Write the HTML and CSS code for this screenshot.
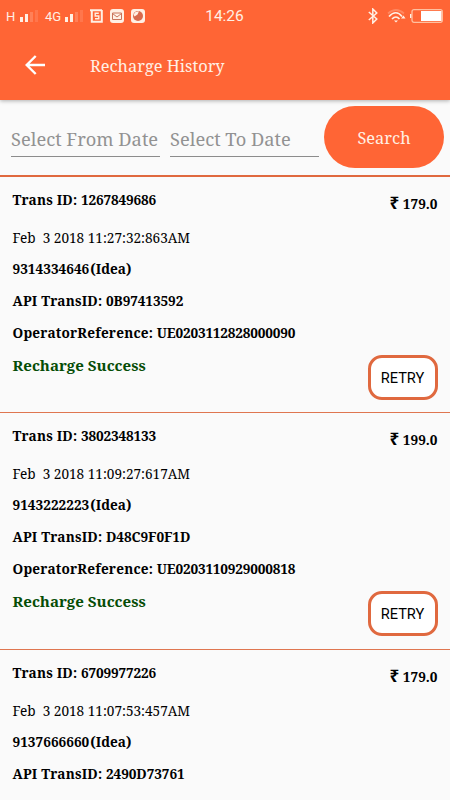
FILE: index.html
```html
<!DOCTYPE html>
<html lang="en">
<head>
  <meta charset="UTF-8" />
  <meta name="viewport" content="width=device-width, initial-scale=1.0"/>
  <title>Recharge History</title>
  <link rel="stylesheet" href="styles.css">
</head>
<body>
  <header class="header">
    <div class="status-bar">
      <div class="status-left">
        <span class="network">H</span>
        <svg class="signal" width="18" height="12" viewBox="0 0 18 12" fill="#fff0e4">
          <rect x="0" y="7" width="3" height="5"/><rect x="5" y="4" width="3" height="8"/>
          <rect x="10" y="2" width="3" height="10" opacity=".2"/><rect x="15" y="0" width="3" height="12" opacity=".13"/>
        </svg>
        <span class="network four-g">4G</span>
        <svg class="signal" width="18" height="12" viewBox="0 0 18 12" fill="#fff0e4">
          <rect x="0" y="7" width="3" height="5"/><rect x="5" y="4" width="3" height="8"/>
          <rect x="10" y="2" width="3" height="10" opacity=".2"/><rect x="15" y="0" width="3" height="12" opacity=".13"/>
        </svg>
        <svg class="note" width="13" height="14" viewBox="0 0 13 14" fill="none" stroke="#fff0e4">
          <path d="M0 1.2h12M1.8 1v11.8h10V1" stroke-width="2"/>
          <path d="M8.8 4.3H5.2V7h3.6v2.8H5" stroke-width="1.4"/>
        </svg>
        <svg class="note" width="14" height="14" viewBox="0 0 14 14">
          <rect width="14" height="14" rx="3" fill="#fff0e4"/>
          <path d="M2.5 4h9v6.5h-9zM2.5 4.5L7 8l4.500-3.500" fill="none" stroke="#c9745b"/>
        </svg>
        <svg class="note" width="14" height="14" viewBox="0 0 14 14">
          <rect width="14" height="14" rx="3" fill="#fff0e4"/>
          <circle cx="7" cy="7" r="5" fill="#d96a4c"/>
          <path d="M2.500 5.500l2-2.500L8 2.300 6.500 5.500l-3 2z" fill="#fff0e4"/>
        </svg>
      </div>
      <span class="clock">14:26</span>
      <div class="status-right">
        <svg width="10" height="16" viewBox="0 0 10 16" fill="none" stroke="#fff0e4" stroke-width="1.5">
          <path d="M.8 4l8 7-4 4V1l4 4-8 7"/>
        </svg>
        <svg class="wifi" width="19" height="14" viewBox="0 0 19 14" fill="none" stroke="#fff0e4" stroke-width="1.7">
          <path d="M1 4.500Q9-2.500 17 4.500" opacity=".25"/>
          <path d="M2 7.500Q9 0 15 7.500M5 10q4-4 7.500 0"/>
          <path d="M7 11.500h4l-2 2zM14 9.500l2.500-3 2 3z" fill="#fff0e4" stroke="none"/>
        </svg>
        <svg class="battery" width="33" height="14" viewBox="0 0 33 14">
          <rect x="0" y="5" width="1.5" height="4" fill="#fff0e4"/>
          <rect x="2" y=".7" width="30.3" height="12.6" rx="2" fill="none" stroke="#ffc0a0" stroke-width="1.3"/>
          <rect x="11" y="2" width="20.5" height="10" fill="#fff"/>
        </svg>
      </div>
    </div>
    <div class="toolbar">
      <svg class="back" width="20" height="20" viewBox="0 0 20 20" fill="none" stroke="#fff" stroke-width="2.4">
        <path d="M20 10H2M10.7 1L1.7 10l9 9"/>
      </svg>
      <h1>Recharge History</h1>
    </div>
  </header>

  <div class="search-bar">
    <div class="date-field from">Select From Date</div>
    <div class="date-field to">Select To Date</div>
    <button class="search-btn">Search</button>
  </div>

  <main class="history">
    <section class="item">
      <div class="details">
        <p class="trans">Trans ID: <span>1267849686</span></p>
        <p class="date">Feb&nbsp; 3 2018 11:27:32:863AM</p>
        <p class="number">9314334646 (Idea)</p>
        <p class="api">API TransID: <span>0B97413592</span></p>
        <p class="operator">OperatorReference: <span>UE0203112828000090</span></p>
        <p class="result">Recharge Success</p>
      </div>
      <div class="side">
        <p class="amount"><span class="rupee">₹</span> 179.0</p>
        <button class="retry-btn">RETRY</button>
      </div>
    </section>
    <section class="item">
      <div class="details">
        <p class="trans">Trans ID: <span>3802348133</span></p>
        <p class="date">Feb&nbsp; 3 2018 11:09:27:617AM</p>
        <p class="number">9143222223 (Idea)</p>
        <p class="api">API TransID: <span>D48C9F0F1D</span></p>
        <p class="operator">OperatorReference: <span>UE0203110929000818</span></p>
        <p class="result">Recharge Success</p>
      </div>
      <div class="side">
        <p class="amount"><span class="rupee">₹</span> 199.0</p>
        <button class="retry-btn">RETRY</button>
      </div>
    </section>
    <section class="item">
      <div class="details">
        <p class="trans">Trans ID: <span>6709977226</span></p>
        <p class="date">Feb&nbsp; 3 2018 11:07:53:457AM</p>
        <p class="number">9137666660 (Idea)</p>
        <p class="api">API TransID: <span>2490D73761</span></p>
        <p class="operator">OperatorReference:</p>
      </div>
      <div class="side">
        <p class="amount"><span class="rupee">₹</span> 179.0</p>
      </div>
    </section>
  </main>
</body>
</html>
```
FILE: styles.css
```css
* { margin: 0; padding: 0; box-sizing: border-box; }
html { height: 800px; overflow: hidden; }
body {
  height: 800px;
  overflow: hidden;
  display: flex;
  flex-direction: column;
  font-family: "Noto Serif", "Droid Serif", "DejaVu Serif", serif;
  background: #fafafa;
  color: #000;
}
button { font-family: inherit; border: none; }
svg { display: block; flex: none; }
.header {
  flex: none;
  height: 100px;
  background: #ff6535;
  color: #fff0e4;
  box-shadow: 0 1px 4px rgba(0,0,0,0.3);
}
.status-bar {
  display: grid;
  grid-template-columns: 1fr 40px 1fr;
  align-items: center;
  height: 32px;
  padding: 0 7px 0 6px;
  font-family: Roboto, sans-serif;
}
.status-left, .status-right { display: flex; align-items: center; margin-top: -1px; }
.status-right { justify-content: flex-end; }
.network { font-size: 13px; width: 14px; padding-top: 2px; }
.four-g { margin-left: 7px; width: 20px; white-space: nowrap; }
.note { margin-left: 7px; }
.clock { font-size: 15.5px; text-align: center; white-space: nowrap; }
.wifi { margin-left: 9px; }
.battery { margin-left: 4px; }
.toolbar { display: flex; align-items: center; height: 66px; padding-left: 25px; }
.toolbar h1 { margin-left: 45px; font-size: 16.4px; font-weight: 400; }
.search-bar {
  flex: none;
  display: flex;
  height: 77px;
  padding: 6px 6px 0 11px;
  border-bottom: 2px solid #e0693f;
}
.date-field {
  width: 149px;
  height: 51px;
  margin-right: 10px;
  border-bottom: 1px solid #8c8c8c;
  font-size: 18.3px;
  line-height: 66px;
  color: #929292;
  white-space: nowrap;
}
.date-field.to { margin-right: 5px; }
.search-btn {
  width: 120px;
  height: 62px;
  border-radius: 31px;
  background: #ff6535;
  color: #fff0e4;
  font-size: 16.4px;
}
.history { flex: 1; min-height: 0; overflow: hidden; }
.item {
  display: flex;
  justify-content: space-between;
  height: 236.3px;
  padding: 7px 12.5px 0;
  border-bottom: 1px solid #df7650;
}
.details p {
  height: 32px;
  line-height: 32px;
  font-size: 13.6px;
  font-weight: 700;
  white-space: nowrap;
}
.details .trans { height: 38px; letter-spacing: .2px; }
.details .api, .details .operator { letter-spacing: .2px; }
.details .trans span, .details .operator span { letter-spacing: -.2px; }
.details .api span { letter-spacing: -.1px; }
.details .date { height: 31px; line-height: 31px; font-weight: 400; }
.details .number { word-spacing: -2.5px; }
.details .result { font-size: 15.1px; line-height: 33px; color: #064d06; }
.item:last-child .operator { line-height: 31px; }
.side { display: flex; flex-direction: column; align-items: flex-end; }
.amount { height: 171px; line-height: 40px; font-size: 13.6px; font-weight: 700; white-space: nowrap; }
.rupee { font-family: "Noto Sans", sans-serif; font-size: 17px; line-height: 1; }
.retry-btn {
  width: 70px;
  height: 45px;
  border: 3px solid #e0693f;
  border-radius: 14px;
  background: #fff;
  font-family: Roboto, sans-serif;
  font-size: 14.6px;
  color: #000;
}
```
